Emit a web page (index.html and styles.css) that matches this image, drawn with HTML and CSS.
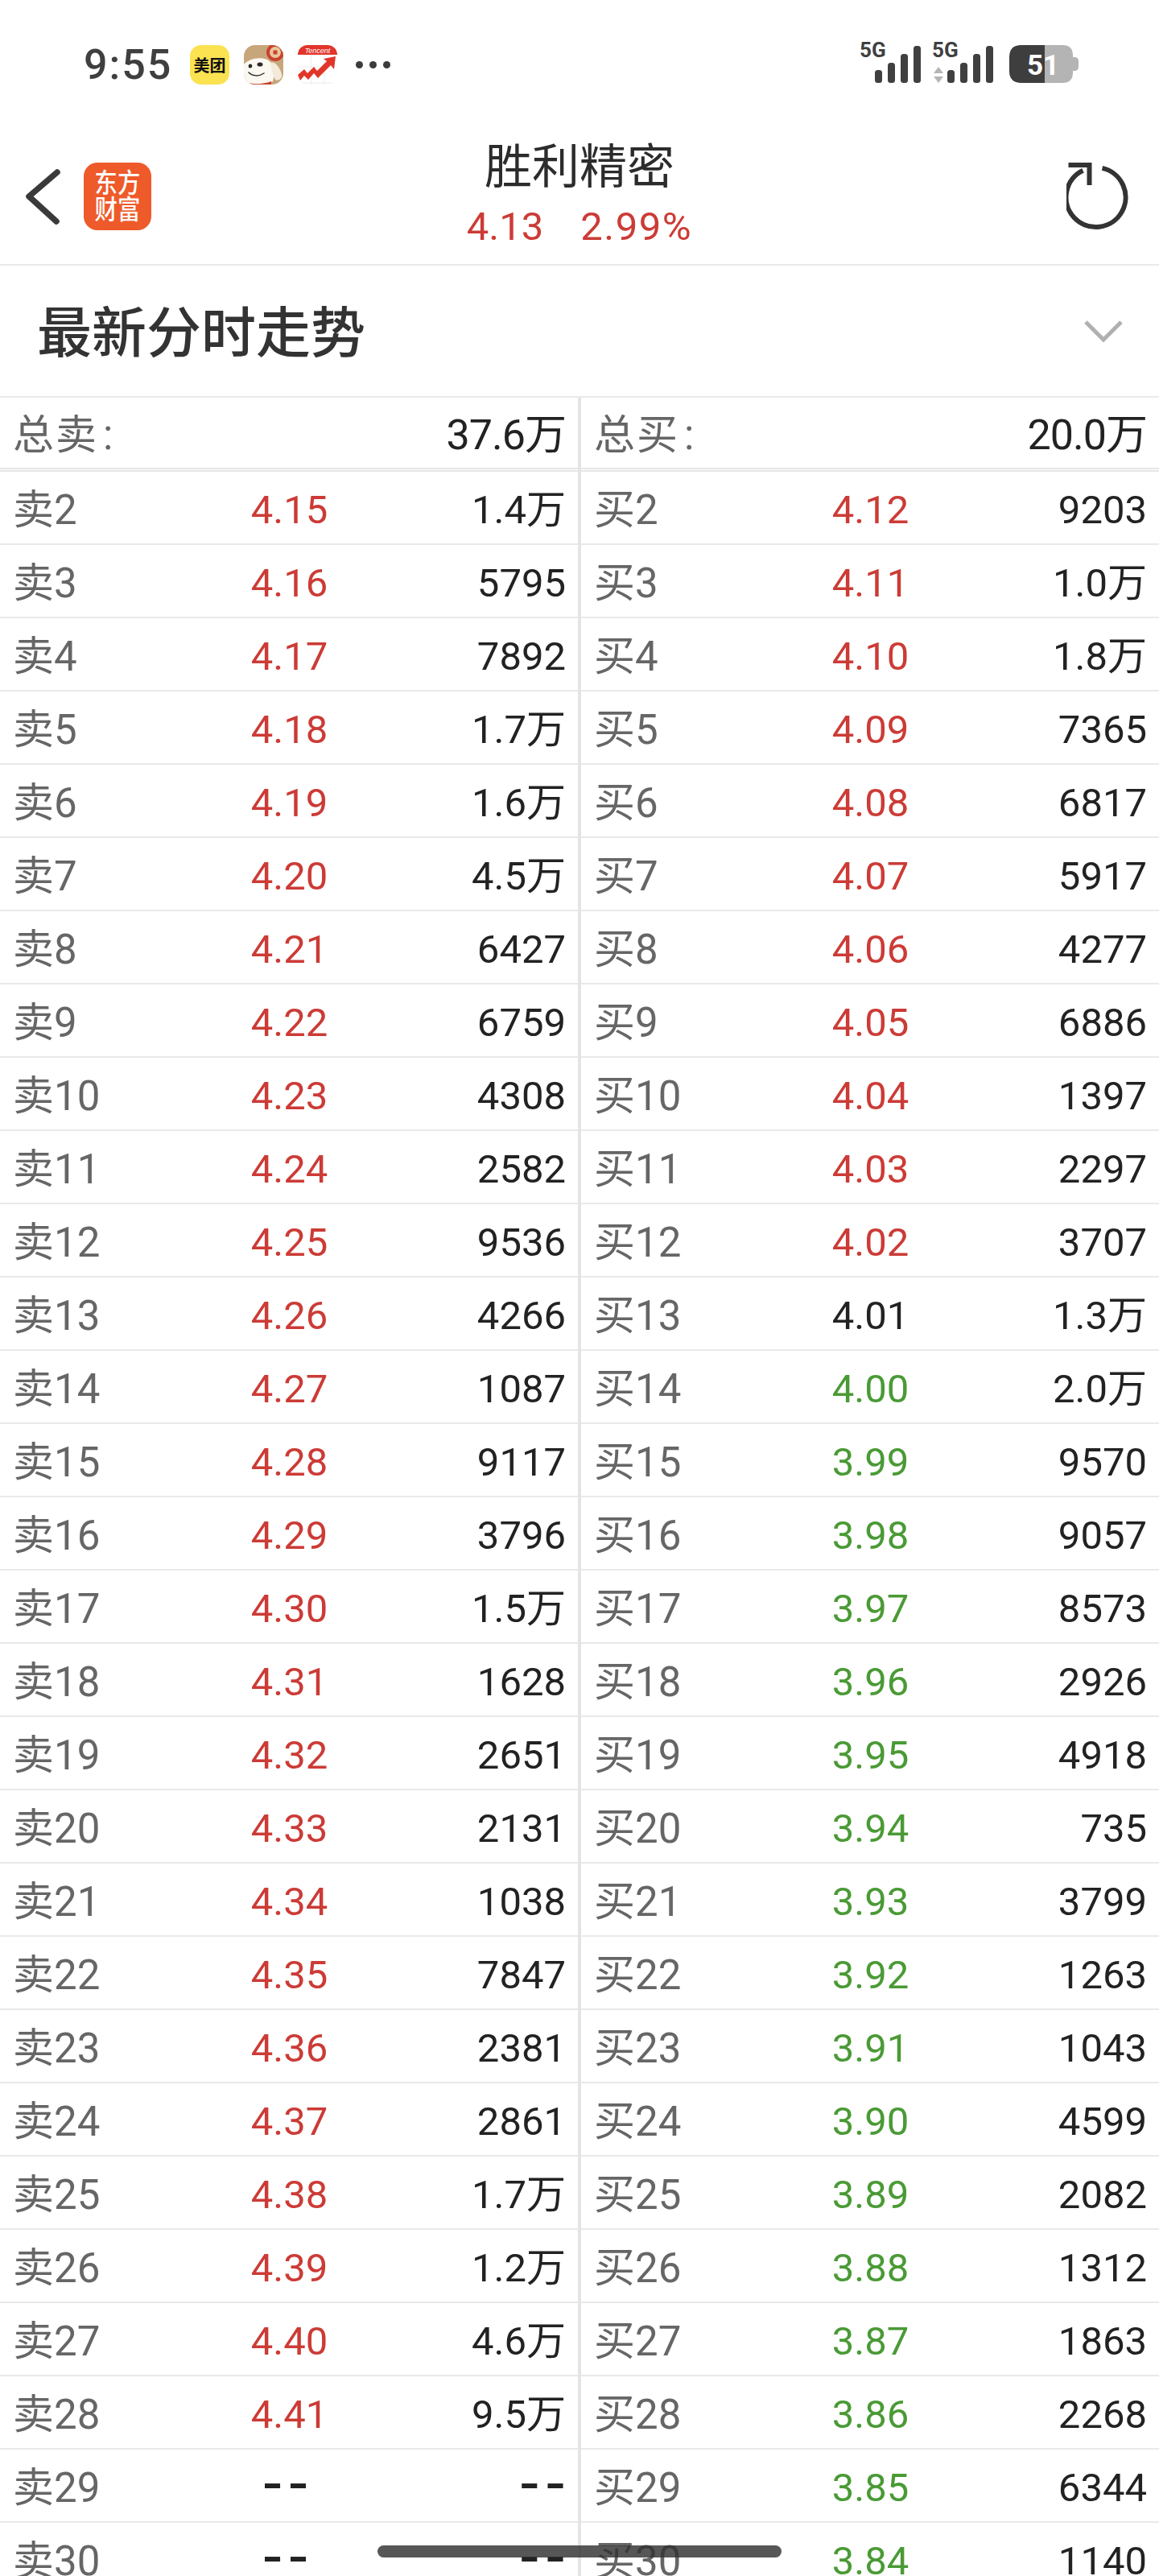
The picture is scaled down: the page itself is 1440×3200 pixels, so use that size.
FILE: index.html
```html
<!DOCTYPE html>
<html lang="zh-CN">
<head>
<meta charset="utf-8">
<title>胜利精密</title>
<link rel="stylesheet" href="styles.css">
</head>
<body>
<div class="page">
  <div class="status">
    <div class="status-left">
      <span class="time">9:55</span>
      <span class="app app-mt">美团</span>
      <svg class="app" viewBox="0 0 49 49" aria-hidden="true">
        <defs><clipPath id="jdclip"><rect width="49" height="49" rx="14"/></clipPath></defs>
        <g clip-path="url(#jdclip)">
          <rect width="49" height="49" fill="#c8a67c"/>
          <circle cx="39" cy="9" r="11" fill="#c9432f"/>
          <circle cx="39" cy="9" r="7" fill="#e9c79a"/>
          <rect x="36.500" y="6.500" width="5" height="5" fill="#c9432f"/>
          <path d="M0 24C6 17 19 14 29 18C33 20 37 26 39 30L36 45C28 49 10 50 2 46L0 44Z" fill="#fbf8f2"/>
          <path d="M33 22C38 20 44 26 47 36C48 42 43 45 39 43C36 38 34 30 33 22Z" fill="#f3ead9"/>
          <ellipse cx="8" cy="26" rx="2.300" ry="2.600" fill="#2a2a2a"/>
          <ellipse cx="20" cy="24" rx="3.500" ry="2.600" fill="#2a2a2a"/>
          <path d="M6 34C11 39 19 39 25 35" fill="none" stroke="#2a2a2a" stroke-width="1.500" stroke-linecap="round"/>
          <path d="M3 46C10 49 24 49 34 45L34 49L3 49Z" fill="#c9432f"/>
        </g>
      </svg>
      <svg class="app" viewBox="0 0 49 49" aria-hidden="true">
        <defs><clipPath id="txclip"><rect width="49" height="49" rx="12"/></clipPath></defs>
        <g clip-path="url(#txclip)">
          <rect width="49" height="49" fill="#fff"/>
          <path d="M16.500 12V49M33 12V49M0 27H49M0 47H49" stroke="#ececec" stroke-width="1"/>
          <rect width="49" height="12" fill="#e2352a"/>
          <text class="tencent" x="24.500" y="9.500">Tencent</text>
          <path d="M0 37L8 30L12 35L20 27L24 32L36 20L32 17L47 14L45 30L41 25L25 41L20 35L13 43L8 38L3 44Z" fill="#e2352a"/>
        </g>
      </svg>
      <span class="dots"><i></i><i></i><i></i></span>
    </div>
    <div class="status-right">
      <svg class="signal" viewBox="0 -10 78 61" aria-hidden="true">
        <text class="net" x="0" y="19">5G</text>
        <rect x="19" y="35" width="9" height="16" rx="3.500"/>
        <rect x="35" y="26" width="9" height="25" rx="3.500"/>
        <rect x="51" y="15" width="9" height="36" rx="3.500"/>
        <rect x="67" y="5" width="9" height="46" rx="3.500"/>
      </svg>
      <svg class="signal" viewBox="0 -10 78 61" aria-hidden="true">
        <text class="net" x="0" y="19">5G</text>
        <path class="arrow" d="M8 31L14 39H2ZM2 43H14L8 51Z"/>
        <rect x="19" y="35" width="9" height="16" rx="3.500"/>
        <rect x="35" y="26" width="9" height="25" rx="3.500"/>
        <rect x="51" y="15" width="9" height="36" rx="3.500"/>
        <rect x="67" y="5" width="9" height="46" rx="3.500"/>
      </svg>
      <svg class="battery" viewBox="0 0 86 47" aria-hidden="true">
        <path class="batt-bg" d="M44 0H66Q79 0 79 13V34Q79 47 66 47H44ZM79 15H81Q86 15 86 20V27Q86 32 81 32H79Z"/>
        <path class="batt-fg" d="M44 0H15Q0 0 0 15V32Q0 47 15 47H44Z"/>
        <text class="batt-num" x="22" y="37">51</text>
      </svg>
    </div>
  </div>

  <header class="nav">
    <div class="nav-left">
      <svg class="back" viewBox="0 0 46 72" aria-hidden="true"><path d="M41 6L6 36L40 67"/></svg>
      <span class="logo"><span class="logo-text">东方<br>财富</span></span>
    </div>
    <div class="nav-center">
      <div class="stock">胜利精密</div>
      <div class="quote"><span>4.13</span><span class="pct">2.99%</span></div>
    </div>
    <div class="nav-right">
      <svg class="refresh" viewBox="0 0 80 84" aria-hidden="true">
        <path d="M44.500 6.900A37 37 0 1 1 20.500 9.700"/>
        <path d="M2.500 3H28.500V28"/>
      </svg>
    </div>
  </header>

  <section class="section-title">
    <h2>最新分时走势</h2>
    <svg class="chev" viewBox="0 0 50 28" aria-hidden="true"><path d="M3 3L25 25L47 3"/></svg>
  </section>

  <main class="book">
    <div class="side side-sell">
      <div class="row row-total"><span class="lab">总卖<span class="colon">:</span></span><span></span><span class="val">37.6万</span></div>
      <div class="row"><span class="lab">卖2</span><span class="pr up">4.15</span><span class="val">1.4万</span></div>
      <div class="row"><span class="lab">卖3</span><span class="pr up">4.16</span><span class="val">5795</span></div>
      <div class="row"><span class="lab">卖4</span><span class="pr up">4.17</span><span class="val">7892</span></div>
      <div class="row"><span class="lab">卖5</span><span class="pr up">4.18</span><span class="val">1.7万</span></div>
      <div class="row"><span class="lab">卖6</span><span class="pr up">4.19</span><span class="val">1.6万</span></div>
      <div class="row"><span class="lab">卖7</span><span class="pr up">4.20</span><span class="val">4.5万</span></div>
      <div class="row"><span class="lab">卖8</span><span class="pr up">4.21</span><span class="val">6427</span></div>
      <div class="row"><span class="lab">卖9</span><span class="pr up">4.22</span><span class="val">6759</span></div>
      <div class="row"><span class="lab">卖10</span><span class="pr up">4.23</span><span class="val">4308</span></div>
      <div class="row"><span class="lab">卖11</span><span class="pr up">4.24</span><span class="val">2582</span></div>
      <div class="row"><span class="lab">卖12</span><span class="pr up">4.25</span><span class="val">9536</span></div>
      <div class="row"><span class="lab">卖13</span><span class="pr up">4.26</span><span class="val">4266</span></div>
      <div class="row"><span class="lab">卖14</span><span class="pr up">4.27</span><span class="val">1087</span></div>
      <div class="row"><span class="lab">卖15</span><span class="pr up">4.28</span><span class="val">9117</span></div>
      <div class="row"><span class="lab">卖16</span><span class="pr up">4.29</span><span class="val">3796</span></div>
      <div class="row"><span class="lab">卖17</span><span class="pr up">4.30</span><span class="val">1.5万</span></div>
      <div class="row"><span class="lab">卖18</span><span class="pr up">4.31</span><span class="val">1628</span></div>
      <div class="row"><span class="lab">卖19</span><span class="pr up">4.32</span><span class="val">2651</span></div>
      <div class="row"><span class="lab">卖20</span><span class="pr up">4.33</span><span class="val">2131</span></div>
      <div class="row"><span class="lab">卖21</span><span class="pr up">4.34</span><span class="val">1038</span></div>
      <div class="row"><span class="lab">卖22</span><span class="pr up">4.35</span><span class="val">7847</span></div>
      <div class="row"><span class="lab">卖23</span><span class="pr up">4.36</span><span class="val">2381</span></div>
      <div class="row"><span class="lab">卖24</span><span class="pr up">4.37</span><span class="val">2861</span></div>
      <div class="row"><span class="lab">卖25</span><span class="pr up">4.38</span><span class="val">1.7万</span></div>
      <div class="row"><span class="lab">卖26</span><span class="pr up">4.39</span><span class="val">1.2万</span></div>
      <div class="row"><span class="lab">卖27</span><span class="pr up">4.40</span><span class="val">4.6万</span></div>
      <div class="row"><span class="lab">卖28</span><span class="pr up">4.41</span><span class="val">9.5万</span></div>
      <div class="row"><span class="lab">卖29</span><span class="pr flat dash">--</span><span class="val dash">--</span></div>
      <div class="row"><span class="lab">卖30</span><span class="pr flat dash">--</span><span class="val dash">--</span></div>
    </div>
    <div class="side side-buy">
      <div class="row row-total"><span class="lab">总买<span class="colon">:</span></span><span></span><span class="val">20.0万</span></div>
      <div class="row"><span class="lab">买2</span><span class="pr up">4.12</span><span class="val">9203</span></div>
      <div class="row"><span class="lab">买3</span><span class="pr up">4.11</span><span class="val">1.0万</span></div>
      <div class="row"><span class="lab">买4</span><span class="pr up">4.10</span><span class="val">1.8万</span></div>
      <div class="row"><span class="lab">买5</span><span class="pr up">4.09</span><span class="val">7365</span></div>
      <div class="row"><span class="lab">买6</span><span class="pr up">4.08</span><span class="val">6817</span></div>
      <div class="row"><span class="lab">买7</span><span class="pr up">4.07</span><span class="val">5917</span></div>
      <div class="row"><span class="lab">买8</span><span class="pr up">4.06</span><span class="val">4277</span></div>
      <div class="row"><span class="lab">买9</span><span class="pr up">4.05</span><span class="val">6886</span></div>
      <div class="row"><span class="lab">买10</span><span class="pr up">4.04</span><span class="val">1397</span></div>
      <div class="row"><span class="lab">买11</span><span class="pr up">4.03</span><span class="val">2297</span></div>
      <div class="row"><span class="lab">买12</span><span class="pr up">4.02</span><span class="val">3707</span></div>
      <div class="row"><span class="lab">买13</span><span class="pr flat">4.01</span><span class="val">1.3万</span></div>
      <div class="row"><span class="lab">买14</span><span class="pr down">4.00</span><span class="val">2.0万</span></div>
      <div class="row"><span class="lab">买15</span><span class="pr down">3.99</span><span class="val">9570</span></div>
      <div class="row"><span class="lab">买16</span><span class="pr down">3.98</span><span class="val">9057</span></div>
      <div class="row"><span class="lab">买17</span><span class="pr down">3.97</span><span class="val">8573</span></div>
      <div class="row"><span class="lab">买18</span><span class="pr down">3.96</span><span class="val">2926</span></div>
      <div class="row"><span class="lab">买19</span><span class="pr down">3.95</span><span class="val">4918</span></div>
      <div class="row"><span class="lab">买20</span><span class="pr down">3.94</span><span class="val">735</span></div>
      <div class="row"><span class="lab">买21</span><span class="pr down">3.93</span><span class="val">3799</span></div>
      <div class="row"><span class="lab">买22</span><span class="pr down">3.92</span><span class="val">1263</span></div>
      <div class="row"><span class="lab">买23</span><span class="pr down">3.91</span><span class="val">1043</span></div>
      <div class="row"><span class="lab">买24</span><span class="pr down">3.90</span><span class="val">4599</span></div>
      <div class="row"><span class="lab">买25</span><span class="pr down">3.89</span><span class="val">2082</span></div>
      <div class="row"><span class="lab">买26</span><span class="pr down">3.88</span><span class="val">1312</span></div>
      <div class="row"><span class="lab">买27</span><span class="pr down">3.87</span><span class="val">1863</span></div>
      <div class="row"><span class="lab">买28</span><span class="pr down">3.86</span><span class="val">2268</span></div>
      <div class="row"><span class="lab">买29</span><span class="pr down">3.85</span><span class="val">6344</span></div>
      <div class="row"><span class="lab">买30</span><span class="pr down">3.84</span><span class="val">1140</span></div>
    </div>
  </main>
  <div class="home-bar"></div>
</div>
</body>
</html>
```
FILE: styles.css
```css
* { box-sizing: border-box; }
html, body { margin: 0; padding: 0; background: #fff; }
body {
  height: 3200px;
  overflow: hidden;
  font-family: Roboto, "Noto Sans CJK SC", sans-serif;
  color: #222;
}
.page { position: relative; width: 1440px; height: 3200px; overflow: hidden; }

/* status bar */
.status {
  height: 140px;
  padding: 42px 100px 0 104px;
  display: flex;
  justify-content: space-between;
  align-items: flex-start;
}
.status-left { display: flex; align-items: center; height: 49px; margin-top: 14px; }
.time { width: 110px; margin-right: 22px; font-size: 52px; font-weight: 500; line-height: 49px; color: #3f3f3f; letter-spacing: 2px; white-space: nowrap; }
.app { width: 49px; height: 49px; margin-right: 18px; flex: none; display: block; }
.app-mt {
  display: flex; align-items: center; justify-content: center;
  background: #fbe251; border-radius: 14px;
  font-size: 20px; font-weight: 700; color: #111;
}
.tencent { font-family: "Liberation Sans", sans-serif; font-size: 9px; font-style: italic; fill: #fff; text-anchor: middle; }
.dots { display: flex; gap: 8px; margin-left: 5px; }
.dots i { display: block; width: 9px; height: 9px; border-radius: 50%; background: #3c3c3c; }
.status-right { display: flex; align-items: flex-start; }
.signal { width: 78px; height: 61px; margin-right: 12px; flex: none; fill: #404040; }
.signal + .signal { margin-right: 18px; }
.net { font-family: Roboto, sans-serif; font-size: 26px; font-weight: 700; fill: #404040; }
.arrow { fill: #b5b5b5; }
.battery { width: 86px; height: 47px; margin-top: 14px; flex: none; }
.batt-bg { fill: #b4b4b4; }
.batt-fg { fill: #3e3e3e; }
.batt-num { font-family: Roboto, sans-serif; font-size: 35px; font-weight: 700; fill: #fff; }

/* nav */
.nav {
  height: 190px;
  padding-top: 20px;
  display: grid;
  grid-template-columns: 1fr auto 1fr;
  align-items: center;
  border-bottom: 2px solid #e9e9e9;
}
.nav-left { display: flex; align-items: center; padding-left: 30px; }
.back { width: 46px; height: 72px; margin-right: 28px; fill: none; stroke: #3a3a3a; stroke-width: 7.500; stroke-linecap: round; stroke-linejoin: round; }
.logo {
  width: 84px; height: 84px; border-radius: 17px; background: #ee5a2a; color: #fff;
  display: flex; align-items: center; justify-content: center;
}
.logo-text { display: block; font-size: 33px; line-height: 33px; font-weight: 500; text-align: center; transform: scaleX(0.86); white-space: nowrap; }
.nav-center { text-align: center; align-self: start; padding-top: 13px; }
.stock { font-size: 59px; line-height: 70px; color: #2c2c2c; }
.quote { display: flex; justify-content: center; gap: 46px; margin-top: 10px; font-size: 49px; line-height: 58px; color: #cc3b36; }
.pct { letter-spacing: 1.500px; }
.nav-right { display: flex; justify-content: flex-end; padding-right: 35px; }
.refresh { width: 80px; height: 84px; fill: none; stroke: #333; stroke-width: 6; }

/* section */
.section-title {
  height: 162px;
  padding: 0 44px 0 46px;
  display: flex;
  align-items: center;
  justify-content: space-between;
}
.section-title h2 { margin: 0 0 6px; font-size: 68px; font-weight: 500; color: #333; }
.chev { width: 50px; height: 28px; fill: none; stroke: #b0b0b0; stroke-width: 5; }

/* order book */
.book { display: grid; grid-template-columns: 722px 718px; border-top: 2px solid #e9e9e9; }
.side-sell { border-right: 4px solid #e4e4e4; }
.row {
  height: 91px;
  display: grid;
  grid-template-columns: 1fr auto 1fr;
  align-items: center;
  padding: 6px 15px 0 16px;
  border-bottom: 2px solid #e9e9e9;
  font-size: 49px;
  line-height: 83px;
  white-space: nowrap;
}
.row-total { height: 92px; padding-top: 5px; border-bottom: 5px double #e6e6e6; }
.lab { color: #666; font-size: 51px; }
.row-total .lab { letter-spacing: 2px; }
.row-total .val { font-size: 52px; letter-spacing: -1px; }
.colon { margin-left: 6px; }
.val { text-align: right; color: #222; }
.pr { text-align: center; }
.up { color: #cc3b36; }
.down { color: #4a9a35; }
.flat { color: #222; }
.dash { font-size: 80px; line-height: 73px; padding-bottom: 10px; letter-spacing: 10px; }
.val.dash { margin-right: -8px; }

.home-bar {
  position: absolute;
  left: 469px;
  top: 3162px;
  width: 502px;
  height: 15px;
  border-radius: 8px;
  background: rgba(50, 50, 50, 0.82);
}
```
